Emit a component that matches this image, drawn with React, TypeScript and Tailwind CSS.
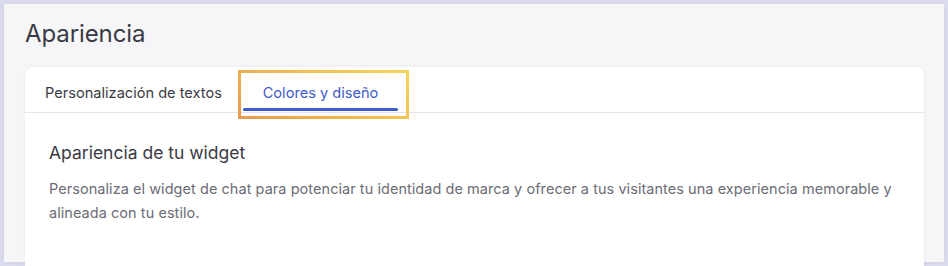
import React from "react";

export default function App() {
  return (
    <div className="w-[948px] h-[266px] bg-[#dcdcf1] pt-[4px] pl-[4px] overflow-hidden" style={{ fontFamily: "Inter, 'Noto Sans', sans-serif" }}>
      <div className="w-[940px] h-[258px] bg-[#f6f6f9] shadow-[0_0_6px_rgba(0,0,0,0.06)] pl-[21px] pr-[20px] pt-[15px]">
        <h1 className="text-[24px] leading-[30px] text-[#3a3a44] font-normal tracking-[-0.1px]">Apariencia</h1>
        <div className="mt-[18px] bg-white rounded-t-[8px] shadow-[0_0_4px_rgba(0,0,0,0.05)] h-[200px]">
          <div className="flex h-[46px] border-b border-[#e4e4ea] pl-[20px]">
            <div className="flex items-center pt-[8px] w-[198px] text-[14.6px] text-[#3b3b45]">Personalización de textos</div>
            <div className="relative flex items-center justify-center w-[155px] pt-[8px] text-[14.6px] text-[#3f5bc8]">
              Colores y diseño
              <div className="absolute left-0 right-0 bottom-[1px] h-[3px] bg-[#3f5bc8] rounded-full" />
              <div className="absolute left-[-5px] right-[-11px] top-[3px] bottom-[-7px] border-[3px] border-[#f0b44c] [border-image:linear-gradient(30deg,#e99a4c,#f2bd52_55%,#f7d45a)_1]" />
            </div>
          </div>
          <div className="pl-[24px] pr-[20px] pt-[28px]">
            <h2 className="text-[17.5px] leading-[24px] text-[#3a3a44]">Apariencia de tu widget</h2>
            <p className="mt-[12px] text-[14.5px] leading-[24px] text-[#6c6c76] tracking-[0.05px]">
              Personaliza el widget de chat para potenciar tu identidad de marca y ofrecer a tus visitantes una experiencia memorable y alineada con tu estilo.
            </p>
          </div>
        </div>
      </div>
    </div>
  );
}
